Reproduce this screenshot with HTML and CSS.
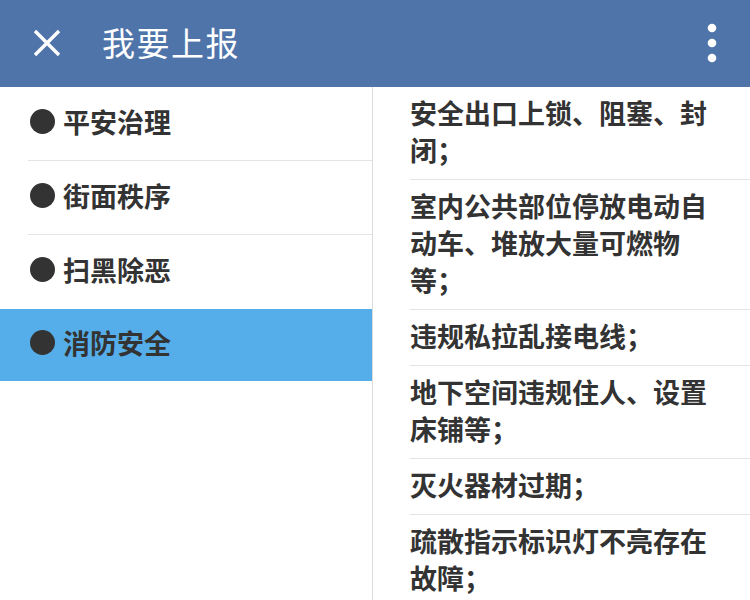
FILE: index.html
```html
<!DOCTYPE html>
<html lang="zh-CN">
<head>
<meta charset="utf-8">
<link rel="stylesheet" href="styles.css">
</head>
<body>
<div class="app">
  <header class="topbar">
    <svg class="close" width="30" height="30" viewBox="0 0 30 30"><path d="M3 3L27 27M27 3L3 27" stroke="#fff" stroke-width="3.4" stroke-linecap="butt"/></svg>
    <span class="title">我要上报</span>
    <span class="spacer"></span>
    <svg class="more" width="12" height="40" viewBox="0 0 12 40"><circle cx="6" cy="5" r="4.3" fill="#fff"/><circle cx="6" cy="20" r="4.3" fill="#fff"/><circle cx="6" cy="35" r="4.3" fill="#fff"/></svg>
  </header>
  <div class="body">
    <ul class="cats">
      <li class="cat"><span class="dot"></span><span class="label">平安治理</span></li>
      <li class="cat"><span class="dot"></span><span class="label">街面秩序</span></li>
      <li class="cat"><span class="dot"></span><span class="label">扫黑除恶</span></li>
      <li class="cat active"><span class="dot"></span><span class="label">消防安全</span></li>
    </ul>
    <ul class="items">
      <li class="item">安全出口上锁、阻塞、封闭；</li>
      <li class="item">室内公共部位停放电动自动车、堆放大量可燃物等；</li>
      <li class="item">违规私拉乱接电线；</li>
      <li class="item">地下空间违规住人、设置床铺等；</li>
      <li class="item">灭火器材过期；</li>
      <li class="item">疏散指示标识灯不亮存在故障；</li>
    </ul>
  </div>
</div>
</body>
</html>
```
FILE: styles.css
```css
* { box-sizing: border-box; }
html, body { margin: 0; padding: 0; }
body {
  width: 750px;
  height: 600px;
  overflow: hidden;
  background: #fff;
  font-family: "Noto Sans CJK SC", "Noto Sans", sans-serif;
  color: #333;
}
.app { display: flex; flex-direction: column; height: 600px; }
.topbar {
  height: 87px;
  flex: none;
  background: #4e74aa;
  display: flex;
  align-items: center;
  padding: 0 32px 4px 32px;
}
.close { flex: none; margin-top: 2px; }
.title {
  margin-left: 40px;
  color: #fff;
  font-size: 33px;
  font-weight: 400;
  letter-spacing: 1.5px;
}
.spacer { flex: 1; }
.more { flex: none; margin-top: 2px; }
.body { flex: 1; display: flex; min-height: 0; }
.cats {
  list-style: none;
  margin: 0;
  padding: 0;
  width: 373px;
  flex: none;
  border-right: 1px solid #dcdcdc;
}
.cat {
  height: 74px;
  display: flex;
  align-items: center;
  margin-left: 28px;
  padding-left: 2px;
  padding-bottom: 5px;
  border-bottom: 1px solid #e4e4e4;
}
.cat.active {
  background: #55aee9;
  margin-left: 0;
  padding-left: 30px;
  border-bottom: none;
  height: 72px;
}
.cat:nth-child(3) { border-bottom: none; }
.dot {
  width: 25px;
  height: 25px;
  border-radius: 50%;
  background: #333;
  flex: none;
}
.label {
  margin-left: 8px;
  font-size: 27px;
  font-weight: 700;
  color: #333;
}
.items {
  list-style: none;
  margin: 0;
  padding: 0 0 0 37px;
  flex: 1;
}
.item {
  padding: 7px 30px 11px 0;
  font-size: 27px;
  line-height: 37px;
  font-weight: 700;
  color: #333;
  border-bottom: 1px solid #e4e4e4;
}
```
